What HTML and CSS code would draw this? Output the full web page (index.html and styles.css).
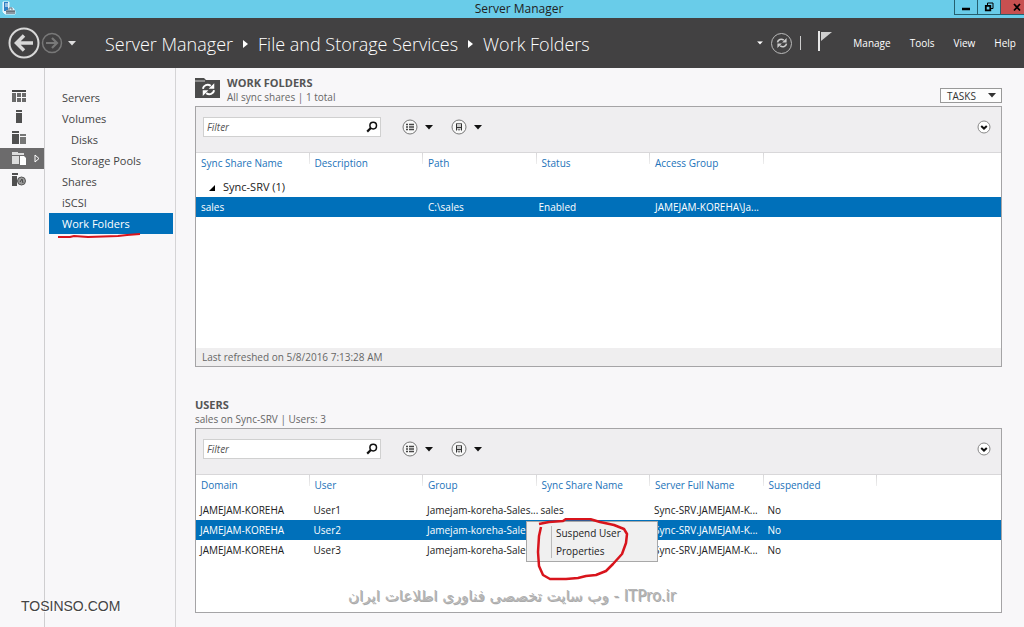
FILE: index.html
```html
<!DOCTYPE html>
<html lang="en">
<head>
  <meta charset="UTF-8">
  <meta name="viewport" content="width=device-width, initial-scale=1.0">
  <title>Server Manager</title>
  <link rel="stylesheet" href="styles.css">
</head>
<body>
  <!-- Shared icons -->
  <svg class="sprite" aria-hidden="true">
    <symbol id="icon-search" viewBox="0 0 12 12">
      <circle cx="7.2" cy="4.6" r="3.3" fill="none" stroke="#111" stroke-width="1.5"/>
      <path d="M4.8 7 L1.2 10.6" stroke="#111" stroke-width="2.2"/>
    </symbol>
    <symbol id="icon-list" viewBox="0 0 16 16">
      <circle cx="8" cy="8" r="7" fill="#f8f8f8" stroke="#777"/>
      <path d="M4 5.5h2M7 5.5h5M4 8h2M7 8h5M4 10.5h2M7 10.5h5" stroke="#444" stroke-width="1.3"/>
    </symbol>
    <symbol id="icon-save" viewBox="0 0 16 16">
      <circle cx="8" cy="8" r="7" fill="#f8f8f8" stroke="#777"/>
      <path d="M5 5h6v6H5z" fill="#ccc"/>
      <path d="M5.500 5v6.500M10.500 5v6.500" stroke="#333"/>
      <path d="M5 4.500h6" stroke="#777"/>
      <path d="M5 8.500h6M8 10v1.500" stroke="#333"/>
    </symbol>
    <symbol id="icon-expand" viewBox="0 0 14 14">
      <circle cx="7" cy="7" r="6" fill="#fff" stroke="#888"/>
      <path d="M4.2 6l2.8 2.6L9.8 6" fill="none" stroke="#111" stroke-width="2"/>
    </symbol>
    <symbol id="icon-down" viewBox="0 0 8 5">
      <path d="M0 0h8L4 4.6z" fill="currentColor"/>
    </symbol>
    <symbol id="icon-sync" viewBox="0 0 12 12">
      <path d="M1.5 5.4C2 2.6 5.2 1.2 7.8 3.1M10.5 6.6C10 9.4 6.8 10.8 4.2 8.9" fill="none" stroke="currentColor" stroke-width="1.6"/>
      <path d="M10.6 .9v4.5H6.1zM1.4 11.1V6.6h4.5z" fill="currentColor"/>
    </symbol>
  </svg>

  <div class="titlebar">
    <svg class="app-icon" width="14" height="14" viewBox="0 0 14 14">
      <path d="M1 1h6v6h4l2 3v3H3l-2-2z" fill="#e6f5fc" stroke="#e6f5fc"/>
      <path d="M2 1h4v9H2z" fill="#2f7fc4"/>
      <path d="M3 3h3M3 5h3" stroke="#fff"/>
      <path d="M4 9h9v4H4z" fill="#8b98a3"/>
      <path d="M7 9V7h3v2M4 10.500h9" fill="none" stroke="#68747e"/>
    </svg>
    <span class="title">Server Manager</span>
    <div class="window-buttons">
      <button type="button" aria-label="Minimize"><svg width="10" height="10" viewBox="0 0 10 10"><path d="M1 7h8" stroke="#000" stroke-width="2.500"/></svg></button>
      <button type="button" aria-label="Restore"><svg width="10" height="10" viewBox="0 0 10 10"><path d="M3.500 3V1h5.500v5.500H7" fill="none" stroke="#000"/><path d="M1.800 3.800h4.500v4.500H1.800z" fill="none" stroke="#000" stroke-width="1.800"/></svg></button>
      <button type="button" class="close" aria-label="Close"><svg width="10" height="10" viewBox="0 0 10 10"><path d="M2 2l6 6.500M8 2L2 8.500" stroke="#000" stroke-width="1.800"/></svg></button>
    </div>
  </div>

  <header class="header">
    <div class="history">
      <button type="button" aria-label="Back">
        <svg width="32" height="32" viewBox="0 0 32 32"><circle cx="16" cy="16" r="14.500" fill="none" stroke="#d8d8d8" stroke-width="2"/><path d="M25 16H9M16 8.500L8.500 16l7.500 7.500" fill="none" stroke="#d8d8d8" stroke-width="3.500"/></svg>
      </button>
      <button type="button" aria-label="Forward">
        <svg width="22" height="22" viewBox="0 0 22 22"><circle cx="11" cy="11" r="9.500" fill="none" stroke="#787878" stroke-width="1.500"/><path d="M5 11h11M11 6l5 5-5 5" fill="none" stroke="#787878" stroke-width="2.200"/></svg>
      </button>
      <button type="button" class="history-menu" aria-label="History"><svg width="8" height="5"><use href="#icon-down"/></svg></button>
    </div>
    <nav class="breadcrumb" aria-label="Breadcrumb">
      <a href="#">Server Manager</a>
      <svg width="5" height="8" viewBox="0 0 5 8"><path d="M0 0l5 4-5 4z" fill="#fff"/></svg>
      <a href="#">File and Storage Services</a>
      <svg width="5" height="8" viewBox="0 0 5 8"><path d="M0 0l5 4-5 4z" fill="#fff"/></svg>
      <a href="#">Work Folders</a>
    </nav>
    <div class="header-tools">
      <button type="button" aria-label="Refresh options"><svg width="6" height="4" viewBox="0 0 8 5"><use href="#icon-down"/></svg></button>
      <button type="button" class="refresh" aria-label="Refresh"><svg width="12" height="12"><use href="#icon-sync"/></svg></button>
      <span class="divider"></span>
      <button type="button" class="flag" aria-label="Notifications">
        <svg width="14" height="20" viewBox="0 0 14 20"><path d="M1 0v20" stroke="#e8e8e8" stroke-width="2"/><path d="M3 1h11L3 10z" fill="#d0d0d0"/></svg>
      </button>
    </div>
    <nav class="menu">
      <a href="#">Manage</a>
      <a href="#">Tools</a>
      <a href="#">View</a>
      <a href="#">Help</a>
    </nav>
  </header>

  <div class="layout">
    <nav class="icon-nav" aria-label="Sections">
      <a href="#" aria-label="Dashboard"><svg width="14" height="14" viewBox="0 0 14 14"><path d="M0 1h14v2H0z" fill="#444"/><path d="M0 4h4v9H0zM5 4h4v4H5zM10 4h4v4h-4zM5 9h4v4H5zM10 9h4v4h-4z" fill="#6a6a6a"/></svg></a>
      <a href="#" aria-label="Local Server"><svg width="14" height="14" viewBox="0 0 14 14"><path d="M4 0h6v2H4zM4 3h6v10H4z" fill="#505050"/></svg></a>
      <a href="#" aria-label="All Servers"><svg width="14" height="14" viewBox="0 0 14 14"><path d="M0 0h7v2H0zM0 3h7v10H0z" fill="#505050"/><path d="M8 3h6v2H8zM8 6h6v7H8z" fill="#777"/></svg></a>
      <a href="#" class="active" aria-label="File and Storage Services">
        <svg width="14" height="14" viewBox="0 0 14 14"><path d="M0 0h6v1h6v2H0zM0 4h7v8H0z" fill="#ddd"/><path d="M8 4h4l2 2v7H8z" fill="#fff"/></svg>
        <svg class="arrow" width="6" height="9" viewBox="0 0 6 9"><path d="M1 1l4 3.500L1 8z" fill="none" stroke="#fff"/></svg>
      </a>
      <a href="#" aria-label="Health"><svg width="14" height="14" viewBox="0 0 14 14"><path d="M0 0h6v2H0zM0 3h5v10H0z" fill="#505050"/><circle cx="9.500" cy="8" r="4" fill="#999" stroke="#555"/><path d="M8 9l2-3 1 4" fill="none" stroke="#444"/></svg></a>
    </nav>

    <nav class="side-nav" aria-label="File and Storage Services">
      <a href="#">Servers</a>
      <a href="#">Volumes</a>
      <a href="#" class="child">Disks</a>
      <a href="#" class="child">Storage Pools</a>
      <a href="#">Shares</a>
      <a href="#">iSCSI</a>
      <a href="#" class="active">Work Folders
        <svg class="underline" width="84" height="6" viewBox="0 0 84 6"><path d="M1 4h12l4-1 14 1 30-1 9-1 13-1" fill="none" stroke="#d8141c" stroke-width="2"/></svg>
      </a>
    </nav>

    <main class="content">
      <section class="tile">
        <div class="tile-header">
          <svg class="tile-icon" width="26" height="22" viewBox="0 0 26 22">
            <path d="M0 1h9l2 2h14v18H0z" fill="#4c4c4c"/>
            <path d="M0 4h10" stroke="#ccc"/>
            <svg x="6" y="5" width="15" height="15" color="#fff"><use href="#icon-sync"/></svg>
          </svg>
          <div>
            <h2>WORK FOLDERS</h2>
            <p>All sync shares | 1 total</p>
          </div>
          <button type="button" class="tasks">TASKS <svg width="8" height="5"><use href="#icon-down"/></svg></button>
        </div>
        <div class="panel">
          <div class="toolbar">
            <div class="filter">
              <input type="text" placeholder="Filter" aria-label="Filter work folders">
              <button type="button" aria-label="Search"><svg width="12" height="12"><use href="#icon-search"/></svg></button>
            </div>
            <button type="button" class="tool" aria-label="Criteria"><svg width="16" height="16"><use href="#icon-list"/></svg><svg width="8" height="5"><use href="#icon-down"/></svg></button>
            <button type="button" class="tool" aria-label="Saved queries"><svg width="16" height="16"><use href="#icon-save"/></svg><svg width="8" height="5"><use href="#icon-down"/></svg></button>
            <button type="button" class="expand" aria-label="Expand"><svg width="14" height="14"><use href="#icon-expand"/></svg></button>
          </div>
          <div class="grid grid-shares">
            <table>
              <thead>
                <tr>
                  <th>Sync Share Name</th>
                  <th>Description</th>
                  <th>Path</th>
                  <th>Status</th>
                  <th>Access Group</th>
                  <td></td>
                </tr>
              </thead>
              <tbody>
                <tr class="group">
                  <td colspan="6"><svg width="6" height="6" viewBox="0 0 6 6"><path d="M6 0v6H0z"/></svg>Sync-SRV (1)</td>
                </tr>
                <tr class="selected">
                  <td>sales</td>
                  <td></td>
                  <td>C:\sales</td>
                  <td class="state">Enabled</td>
                  <td>JAMEJAM-KOREHA\Ja...</td>
                  <td></td>
                </tr>
              </tbody>
            </table>
          </div>
          <div class="status">Last refreshed on 5/8/2016 7:13:28 AM</div>
        </div>
      </section>

      <section class="tile">
        <div class="tile-header">
          <div>
            <h2>USERS</h2>
            <p>sales on Sync-SRV | Users: 3</p>
          </div>
        </div>
        <div class="panel">
          <div class="toolbar">
            <div class="filter">
              <input type="text" placeholder="Filter" aria-label="Filter users">
              <button type="button" aria-label="Search"><svg width="12" height="12"><use href="#icon-search"/></svg></button>
            </div>
            <button type="button" class="tool" aria-label="Criteria"><svg width="16" height="16"><use href="#icon-list"/></svg><svg width="8" height="5"><use href="#icon-down"/></svg></button>
            <button type="button" class="tool" aria-label="Saved queries"><svg width="16" height="16"><use href="#icon-save"/></svg><svg width="8" height="5"><use href="#icon-down"/></svg></button>
            <button type="button" class="expand" aria-label="Expand"><svg width="14" height="14"><use href="#icon-expand"/></svg></button>
          </div>
          <div class="grid grid-users">
            <table>
              <thead>
                <tr>
                  <th>Domain</th>
                  <th>User</th>
                  <th>Group</th>
                  <th>Sync Share Name</th>
                  <th>Server Full Name</th>
                  <th>Suspended</th>
                  <td></td>
                </tr>
              </thead>
              <tbody>
                <tr>
                  <td>JAMEJAM-KOREHA</td>
                  <td>User1</td>
                  <td>Jamejam-koreha-Sales...</td>
                  <td>sales</td>
                  <td>Sync-SRV.JAMEJAM-K...</td>
                  <td>No</td>
                  <td></td>
                </tr>
                <tr class="selected">
                  <td>JAMEJAM-KOREHA</td>
                  <td>User2</td>
                  <td>Jamejam-koreha-Sales...</td>
                  <td></td>
                  <td>Sync-SRV.JAMEJAM-K...</td>
                  <td>No</td>
                  <td></td>
                </tr>
                <tr>
                  <td>JAMEJAM-KOREHA</td>
                  <td>User3</td>
                  <td>Jamejam-koreha-Sales...</td>
                  <td></td>
                  <td>Sync-SRV.JAMEJAM-K...</td>
                  <td>No</td>
                  <td></td>
                </tr>
              </tbody>
            </table>
            <div class="context-menu">
              <button type="button">Suspend User</button>
              <button type="button">Properties</button>
              <svg class="circle-mark" width="96" height="64" viewBox="0 0 96 64"><path d="M3 6l10-2 14-1 3-2h24l10 3 14 3 10 4 3 5-1 9-4 11-9 10-7 7-10 4-10 1-8 2-12 1H14l-7-4-4-9-1-14 1-16 2-9" fill="none" stroke="#d8141c" stroke-width="2.500" stroke-linejoin="round"/></svg>
            </div>
          </div>
        </div>
      </section>
    </main>
  </div>

  <div class="watermark-left">TOSINSO.COM</div>
  <div class="watermark-center" dir="rtl" lang="fa">ITPro.ir - وب سایت تخصصی فناوری اطلاعات ایران</div>
</body>
</html>
```
FILE: styles.css
```css
* {
  box-sizing: border-box;
}
body {
  margin: 0;
  min-height: 100vh;
  display: flex;
  flex-direction: column;
  position: relative;
  font-family: "Open Sans", "Noto Sans", sans-serif;
  font-size: 10px;
  line-height: 14px;
  color: #222;
  background-color: #f8f7f9;
}
a {
  color: inherit;
  text-decoration: none;
}
button {
  display: flex;
  align-items: center;
  padding: 0;
  border: none;
  background: none;
  font: inherit;
  color: inherit;
}
svg {
  flex: none;
}
.sprite {
  position: absolute;
  width: 0;
  height: 0;
}

/* Title bar */
.titlebar {
  display: grid;
  grid-template-columns: 1fr auto 1fr;
  height: 18px;
  background-color: #69cce9;
}
.app-icon {
  margin: 1px 2px;
}
.title {
  padding-left: 14px;
  font-size: 12px;
  line-height: 18px;
}
.window-buttons {
  display: flex;
  justify-content: flex-end;
}
.window-buttons button {
  justify-content: center;
  width: 23px;
  height: 15px;
  border: 1px solid #25606f;
  border-top: none;
  border-right: none;
}
.window-buttons .close {
  width: 24px;
  padding-left: 8px;
  background-color: #c75050;
}

/* Header */
.header {
  display: flex;
  align-items: center;
  height: 50px;
  padding-right: 8px;
  background-color: #424142;
  color: #fff;
}
.history {
  display: flex;
  align-items: center;
  width: 105px;
  padding-left: 8px;
  gap: 1px;
}
.history-menu {
  margin-left: 4px;
  color: #ddd;
}
.breadcrumb {
  display: flex;
  align-items: center;
  gap: 10px;
  flex: 1;
  padding-top: 2px;
  font-size: 18px;
  line-height: 24px;
  font-weight: 300;
  white-space: nowrap;
  color: #fff;
}
.header-tools {
  display: flex;
  align-items: center;
  gap: 8px;
}
.refresh {
  justify-content: center;
  width: 21px;
  height: 21px;
  border: 1px solid #bbb;
  border-radius: 50%;
  color: #ccc;
}
.divider {
  width: 1px;
  height: 14px;
  background-color: #ccc;
}
.flag {
  margin: 0 13px 4px 9px;
}
.menu {
  display: flex;
  gap: 19px;
  margin-left: 8px;
}

/* Navigation */
.layout {
  flex: 1;
  display: flex;
}
.icon-nav {
  width: 45px;
  padding-top: 17px;
  border-right: 1px solid #cfced0;
}
.icon-nav a {
  display: flex;
  align-items: center;
  height: 21px;
  padding-left: 12px;
}
.icon-nav .active {
  background-color: #6c6b6c;
}
.icon-nav .arrow {
  margin-left: 8px;
}
.side-nav {
  width: 131px;
  padding: 19px 2px 0 4px;
  border-right: 1px solid #d5d4d6;
  font-size: 11px;
  line-height: 21px;
}
.side-nav a {
  display: block;
  padding-left: 13px;
  color: #444;
}
.side-nav .child {
  padding-left: 22px;
}
.side-nav .active {
  position: relative;
  background-color: #0070ba;
  color: #fff;
}
.underline {
  position: absolute;
  left: 8px;
  top: 20px;
}

/* Tiles */
.content {
  flex: 1;
  min-width: 0;
  padding: 7px 22px 14px 19px;
}
.tile + .tile {
  margin-top: 30px;
}
.tile-header {
  display: flex;
  align-items: flex-start;
  height: 31px;
  color: #666;
}
.tile-icon {
  margin: 2px 6px 0 0;
}
.tile-header h2 {
  margin: 0;
  font-size: 11px;
  line-height: 15px;
  font-weight: 700;
  color: #555;
}
.tile-header p {
  margin: 0;
  font-size: 10px;
}
.tasks {
  justify-content: space-between;
  width: 62px;
  height: 15px;
  margin: 13px 0 0 auto;
  padding: 0 5px 0 6px;
  border: 1px solid #999;
  background-color: #fdfdfd;
  color: #333;
}
.panel {
  border: 1px solid #a5a4a6;
  background-color: #fff;
}
.toolbar {
  display: flex;
  align-items: center;
  height: 46px;
  padding: 0 10px 5px 7px;
  border-bottom: 1px solid #d8d7d9;
  background-color: #efeef0;
}
.filter {
  display: flex;
  width: 178px;
  height: 20px;
  padding-right: 2px;
  border: 1px solid #d0d0d0;
  background-color: #fff;
}
.filter input {
  flex: 1;
  min-width: 0;
  padding: 0 3px;
  border: none;
  background: none;
  font: inherit;
  font-style: italic;
}
.filter input::placeholder {
  color: #555;
}
.tool {
  gap: 7px;
  margin-left: 21px;
  color: #111;
}
.tool + .tool {
  margin-left: 18px;
}
.expand {
  margin-left: auto;
}

/* Tables */
.grid {
  position: relative;
}
.grid-shares {
  min-height: 195px;
}
.grid-users {
  min-height: 137px;
}
table {
  width: 100%;
  table-layout: fixed;
  border-collapse: collapse;
}
th, td {
  padding: 0 0 0 5px;
  text-align: left;
  white-space: nowrap;
}
th {
  width: 14.1%;
  height: 24px;
  padding-bottom: 4px;
  font-weight: 400;
  color: #2272b9;
  background: linear-gradient(#d8d7d9, #eee) right top / 1px 11px no-repeat;
}
td {
  height: 20px;
}
.group td {
  font-size: 11px;
  padding-left: 13px;
}
.group svg {
  margin-right: 8px;
}
.grid-shares .state {
  padding-left: 2px;
}
.grid-users th {
  height: 25px;
  padding-bottom: 5px;
}
.grid-users td {
  padding-left: 4px;
}
.selected {
  background-color: #0070ba;
  color: #fff;
}
.status {
  height: 18px;
  padding-left: 6px;
  line-height: 18px;
  background-color: #efeeef;
  color: #666;
}

/* Context menu over the user rows */
.context-menu {
  position: absolute;
  left: 330px;
  top: 46px;
  width: 132px;
  padding: 2px 0 1px;
  border: 1px solid #a8a8a8;
  background: linear-gradient(#bbb, #bbb) 24px 4px / 1px 32px no-repeat #f0f0f0;
}
.context-menu button {
  width: 100%;
  height: 18px;
  padding-left: 29px;
}
.circle-mark {
  position: absolute;
  left: 9px;
  top: -4px;
  pointer-events: none;
}

/* Watermarks */
.watermark-left {
  position: absolute;
  left: 21px;
  bottom: 13px;
  font-family: "Liberation Sans", Arial, sans-serif;
  font-size: 14px;
  line-height: 16px;
  color: #444;
  text-shadow: 1px 1px 0 #fff;
}
.watermark-center {
  position: absolute;
  left: 0;
  right: 0;
  bottom: 20px;
  text-align: center;
  font-family: "DejaVu Sans", sans-serif;
  font-size: 15px;
  line-height: 22px;
  color: #b4b4b4;
  text-shadow: 1px 1px 0 #aaa;
}
```
